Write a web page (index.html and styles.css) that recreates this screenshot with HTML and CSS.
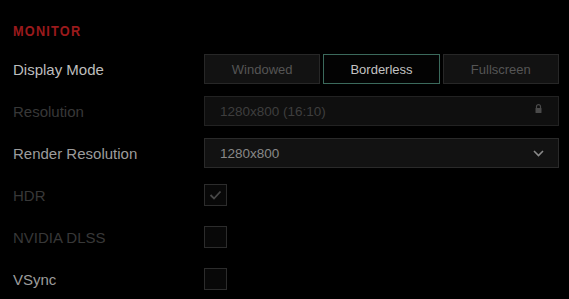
FILE: index.html
```html
<!DOCTYPE html>
<html>
<head>
<meta charset="utf-8">
<link rel="stylesheet" href="styles.css">
</head>
<body>
<div class="panel">
  <h2 class="heading">MONITOR</h2>
  <div class="rows">
    <div class="row">
      <div class="label">Display Mode</div>
      <div class="control seg">
        <div class="seg-btn">Windowed</div>
        <div class="seg-btn active">Borderless</div>
        <div class="seg-btn">Fullscreen</div>
      </div>
    </div>
    <div class="row">
      <div class="label dim">Resolution</div>
      <div class="control field disabled">
        <span>1280x800 (16:10)</span>
        <svg class="lock" width="7" height="9" viewBox="0 0 7 9"><path d="M1.5 4V2.6a2 2 0 0 1 4 0V4" fill="none" stroke="#4a4a4a" stroke-width="1.2"/><rect x="0.5" y="4" width="6" height="5" rx="0.5" fill="#4a4a4a"/></svg>
      </div>
    </div>
    <div class="row">
      <div class="label mid">Render Resolution</div>
      <div class="control field">
        <span>1280x800</span>
        <svg class="chev" width="11" height="7" viewBox="0 0 11 7"><path d="M1 1l4.5 4.5L10 1" fill="none" stroke="#8a8a8a" stroke-width="1.6"/></svg>
      </div>
    </div>
    <div class="row">
      <div class="label dim">HDR</div>
      <div class="control"><div class="check"><svg width="13" height="10" viewBox="0 0 13 10"><path d="M1.5 5l3.5 3.5L11.5 1.5" fill="none" stroke="#484848" stroke-width="1.8"/></svg></div></div>
    </div>
    <div class="row">
      <div class="label dim">NVIDIA DLSS</div>
      <div class="control"><div class="check"></div></div>
    </div>
    <div class="row">
      <div class="label mid">VSync</div>
      <div class="control"><div class="check"></div></div>
    </div>
  </div>
</div>
</body>
</html>
```
FILE: styles.css
```css
html, body {
  margin: 0;
  padding: 0;
  background: #000;
  width: 569px;
  height: 299px;
  overflow: hidden;
  font-family: "Liberation Sans", Arial, sans-serif;
}
.panel {
  padding: 23px 10px 0 13px;
}
.heading {
  margin: 0;
  font-family: "Liberation Sans", Arial, sans-serif;
  font-weight: bold;
  font-size: 15px;
  line-height: 16px;
  letter-spacing: 1.4px;
  color: #9a1a1c;
  height: 16px;
  transform: scaleX(0.85);
  transform-origin: left center;
}
.rows {
  display: flex;
  flex-direction: column;
  margin-top: 15px;
  gap: 12px;
}
.row {
  display: flex;
  align-items: center;
  height: 30px;
}
.label {
  width: 191px;
  font-size: 15px;
  color: #bdbdbd;
}
.label.dim { color: #383838; }
.label.mid { color: #9c9c9c; }
.control {
  width: 355px;
  height: 30px;
  display: flex;
  align-items: center;
}
.seg {
  gap: 3px;
}
.seg-btn {
  flex: 1;
  height: 30px;
  box-sizing: border-box;
  border: 1px solid #272727;
  background: #121212;
  color: #555;
  font-size: 13px;
  display: flex;
  align-items: center;
  justify-content: center;
}
.seg-btn.active {
  background: #030303;
  border-color: #3b6a5c;
  color: #c2c2c2;
}
.field {
  box-sizing: border-box;
  border: 1px solid #2a2a2a;
  background: #121212;
  padding: 0 12px 0 15px;
  justify-content: space-between;
  font-size: 13.5px;
  color: #888;
}
.field.disabled {
  color: #3e3e3e;
  background: #0f0f0f;
  border-color: #222;
}
.lock { margin-right: 4px; margin-top: -5px; }
.chev { margin-right: 2px; }
.check {
  width: 23px;
  height: 22px;
  box-sizing: border-box;
  border: 1px solid #2c2c2c;
  background: #080808;
  display: flex;
  align-items: center;
  justify-content: center;
}
```
